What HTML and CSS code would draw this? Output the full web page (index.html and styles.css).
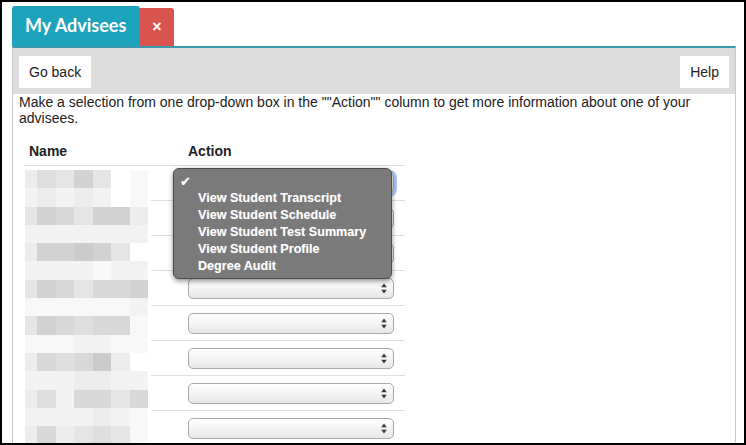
FILE: index.html
```html
<!DOCTYPE html>
<html lang="en">
  <head>
    <meta charset="UTF-8" />
    <title>My Advisees</title>
    <link rel="stylesheet" href="styles.css">
  </head>
  <body>
    <div class="frame">
      <div class="tabs">
        <div class="tab">My Advisees</div>
        <div class="tab-close">&times;</div>
      </div>
      <div class="panel">
        <div class="toolbar">
          <button class="btn">Go back</button>
          <button class="btn">Help</button>
        </div>
        <div class="content">
          <p class="intro">Make a selection from one drop-down box in the ""Action"" column to get more information about one of your advisees.</p>

          <div class="advisees">
            <div class="head">
              <div class="col-name">Name</div>
              <div class="col-action">Action</div>
            </div>
            <div class="body">
              <!-- names are pixelated -->
              <div class="mosaic">
                <i class="d"></i><i class="f"></i><i class="e"></i><i class="h"></i><i class="e"></i><i class="a"></i><i class="b"></i>
                <i class="c"></i><i class="d"></i><i class="c"></i><i class="d"></i><i class="c"></i><i class="a"></i><i class="b"></i>
                <i class="e"></i><i class="h"></i><i class="g"></i><i class="e"></i><i class="h"></i><i class="h"></i><i class="d"></i>
                <i class="c"></i><i class="c"></i><i class="c"></i><i class="c"></i><i class="c"></i><i class="c"></i><i class="c"></i>
                <i class="d"></i><i class="h"></i><i class="h"></i><i class="i"></i><i class="h"></i><i class="e"></i><i class="a"></i>
                <i class="c"></i><i class="c"></i><i class="c"></i><i class="c"></i><i class="b"></i><i class="c"></i><i class="c"></i>
                <i class="e"></i><i class="h"></i><i class="g"></i><i class="e"></i><i class="g"></i><i class="g"></i><i class="h"></i>
                <i class="b"></i><i class="b"></i><i class="b"></i><i class="b"></i><i class="b"></i><i class="b"></i><i class="c"></i>
                <i class="e"></i><i class="h"></i><i class="g"></i><i class="f"></i><i class="g"></i><i class="g"></i><i class="b"></i>
                <i class="b"></i><i class="b"></i><i class="b"></i><i class="c"></i><i class="c"></i><i class="b"></i><i class="b"></i>
                <i class="d"></i><i class="g"></i><i class="f"></i><i class="g"></i><i class="i"></i><i class="d"></i><i class="a"></i>
                <i class="c"></i><i class="c"></i><i class="c"></i><i class="d"></i><i class="d"></i><i class="c"></i><i class="c"></i>
                <i class="d"></i><i class="f"></i><i class="c"></i><i class="g"></i><i class="g"></i><i class="e"></i><i class="g"></i>
                <i class="c"></i><i class="c"></i><i class="c"></i><i class="c"></i><i class="d"></i><i class="c"></i><i class="b"></i>
                <i class="d"></i><i class="g"></i><i class="d"></i><i class="e"></i><i class="f"></i><i class="e"></i><i class="b"></i>
              </div>

              <div class="actions">
                <div class="row open">
                  <div class="select focused">
                    <svg class="arrows" width="6" height="11" viewBox="0 0 6 11"><path d="M3 0.5 L5.8 4.2 H0.2 Z M3 10.5 L5.8 6.8 H0.2 Z" fill="#3a3a3a"/></svg>
                  </div>
                  <!-- open menu of the first drop-down -->
                  <ul class="menu">
                    <li class="checked"><span class="check">&#10004;</span></li>
                    <li>View Student Transcript</li>
                    <li>View Student Schedule</li>
                    <li>View Student Test Summary</li>
                    <li>View Student Profile</li>
                    <li>Degree Audit</li>
                  </ul>
                </div>
                <div class="row">
                  <div class="select"><svg class="arrows" width="6" height="11" viewBox="0 0 6 11"><path d="M3 0.5 L5.8 4.2 H0.2 Z M3 10.5 L5.8 6.8 H0.2 Z" fill="#3a3a3a"/></svg></div>
                </div>
                <div class="row">
                  <div class="select"><svg class="arrows" width="6" height="11" viewBox="0 0 6 11"><path d="M3 0.5 L5.8 4.2 H0.2 Z M3 10.5 L5.8 6.8 H0.2 Z" fill="#3a3a3a"/></svg></div>
                </div>
                <div class="row">
                  <div class="select"><svg class="arrows" width="6" height="11" viewBox="0 0 6 11"><path d="M3 0.5 L5.8 4.2 H0.2 Z M3 10.5 L5.8 6.8 H0.2 Z" fill="#3a3a3a"/></svg></div>
                </div>
                <div class="row">
                  <div class="select"><svg class="arrows" width="6" height="11" viewBox="0 0 6 11"><path d="M3 0.5 L5.8 4.2 H0.2 Z M3 10.5 L5.8 6.8 H0.2 Z" fill="#3a3a3a"/></svg></div>
                </div>
                <div class="row">
                  <div class="select"><svg class="arrows" width="6" height="11" viewBox="0 0 6 11"><path d="M3 0.5 L5.8 4.2 H0.2 Z M3 10.5 L5.8 6.8 H0.2 Z" fill="#3a3a3a"/></svg></div>
                </div>
                <div class="row">
                  <div class="select"><svg class="arrows" width="6" height="11" viewBox="0 0 6 11"><path d="M3 0.5 L5.8 4.2 H0.2 Z M3 10.5 L5.8 6.8 H0.2 Z" fill="#3a3a3a"/></svg></div>
                </div>
                <div class="row">
                  <div class="select"><svg class="arrows" width="6" height="11" viewBox="0 0 6 11"><path d="M3 0.5 L5.8 4.2 H0.2 Z M3 10.5 L5.8 6.8 H0.2 Z" fill="#3a3a3a"/></svg></div>
                </div>
              </div>
            </div>
          </div>
        </div>
      </div>
    </div>
  </body>
</html>
```

FILE: styles.css
```css
body {
  margin: 0;
  font-family: "Liberation Sans", Arial, sans-serif;
  font-size: 14px;
  color: #222;
  background-color: #ffffff;
}

/* Outer frame */
.frame {
  box-sizing: border-box;
  width: 746px;
  height: 445px;
  border: 2px solid #000;
  padding: 4px 8px 0 10px;
  overflow: hidden;
}

/* Tabs */
.tabs {
  display: flex;
  align-items: flex-end;
  height: 40px;
}

.tab {
  height: 40px;
  width: 128px;
  box-sizing: border-box;
  padding-left: 13px;
  line-height: 38px;
  background-color: #1ea3bc;
  color: #fff;
  font-family: Lato, "Open Sans", sans-serif;
  font-weight: 700;
  font-size: 18px;
  border-radius: 3px 3px 0 0;
}

.tab-close {
  height: 38px;
  width: 34px;
  line-height: 38px;
  text-align: center;
  background-color: #d9534f;
  color: #fff;
  font-weight: bold;
  font-size: 16px;
  border-radius: 0 3px 0 0;
}

/* Panel */
.panel {
  width: 724px;
  box-sizing: border-box;
  border-top: 2px solid #3a9aad;
  border-left: 1px solid #c9c9c9;
  border-right: 1px solid #c9c9c9;
  height: 400px;
}

.toolbar {
  display: flex;
  justify-content: space-between;
  height: 46px;
  box-sizing: border-box;
  padding: 8px 6px 6px 6px;
  background-color: #dcdcdc;
}

.btn {
  height: 32px;
  padding: 0 10px;
  border: none;
  background-color: #fff;
  font-family: "Liberation Sans", Arial, sans-serif;
  font-size: 14px;
  color: #222;
}

.content {
  padding: 0 6px;
}

.intro {
  margin: 0;
  line-height: 16px;
}

/* Advisee list */
.advisees {
  margin: 10px 0 0 6px;
  width: 380px;
}

.head {
  display: flex;
  border-bottom: 1px solid #dedede;
  font-weight: bold;
  line-height: 16px;
  padding: 7px 0 6px;
}

.col-name {
  width: 122px;
  padding-left: 4px;
}

.col-action {
  padding-left: 37px;
}

.body {
  display: flex;
  align-items: flex-start;
}

.mosaic {
  display: grid;
  grid-template-columns: 12px repeat(6, 18.5px);
  grid-auto-rows: 18.3px;
  width: 126px;
  margin-top: 4px;
}

.mosaic i { display: block; }
.mosaic .a { background-color: #ffffff; }
.mosaic .b { background-color: #f8f8f8; }
.mosaic .c { background-color: #f3f3f3; }
.mosaic .d { background-color: #ededed; }
.mosaic .e { background-color: #e5e5e5; }
.mosaic .f { background-color: #dedede; }
.mosaic .g { background-color: #d8d8d8; }
.mosaic .h { background-color: #d2d2d2; }
.mosaic .i { background-color: #cbcbcb; }

.actions {
  width: 254px;
}

.row {
  position: relative;
  height: 34px;
  box-sizing: content-box;
  border-bottom: 1px solid #dedede;
  padding-left: 37px;
  display: flex;
  align-items: center;
}

.row.open {
  z-index: 2;
}

.select {
  width: 206px;
  height: 21px;
  box-sizing: border-box;
  border: 1px solid #a8a8a8;
  border-radius: 5px;
  background: linear-gradient(#fefefe, #f2f2f2 60%, #e6e6e6);
  display: flex;
  align-items: center;
  justify-content: flex-end;
  padding-right: 6px;
  margin-top: 1px;
}

.select.focused {
  box-shadow: 0 0 0 3px #a9c8f0;
}

/* Open drop-down menu */
.menu {
  position: absolute;
  left: 22px;
  top: 2px;
  width: 219px;
  height: 111px;
  box-sizing: border-box;
  margin: 0;
  padding: 4px 0 0;
  list-style: none;
  background-color: #7a7a7a;
  border: 1px solid #4d4d4d;
  border-radius: 6px;
  box-shadow: 0 2px 5px rgba(0, 0, 0, 0.45);
  color: #fff;
  font-weight: bold;
  font-size: 12.6px;
}

.menu li {
  height: 17px;
  line-height: 17px;
  padding-left: 24px;
  text-shadow: 0 0 1px rgba(255, 255, 255, 0.3);
}

.menu li.checked {
  padding-left: 6px;
}

.check {
  font-family: "DejaVu Sans", sans-serif;
  font-size: 13px;
}
```
